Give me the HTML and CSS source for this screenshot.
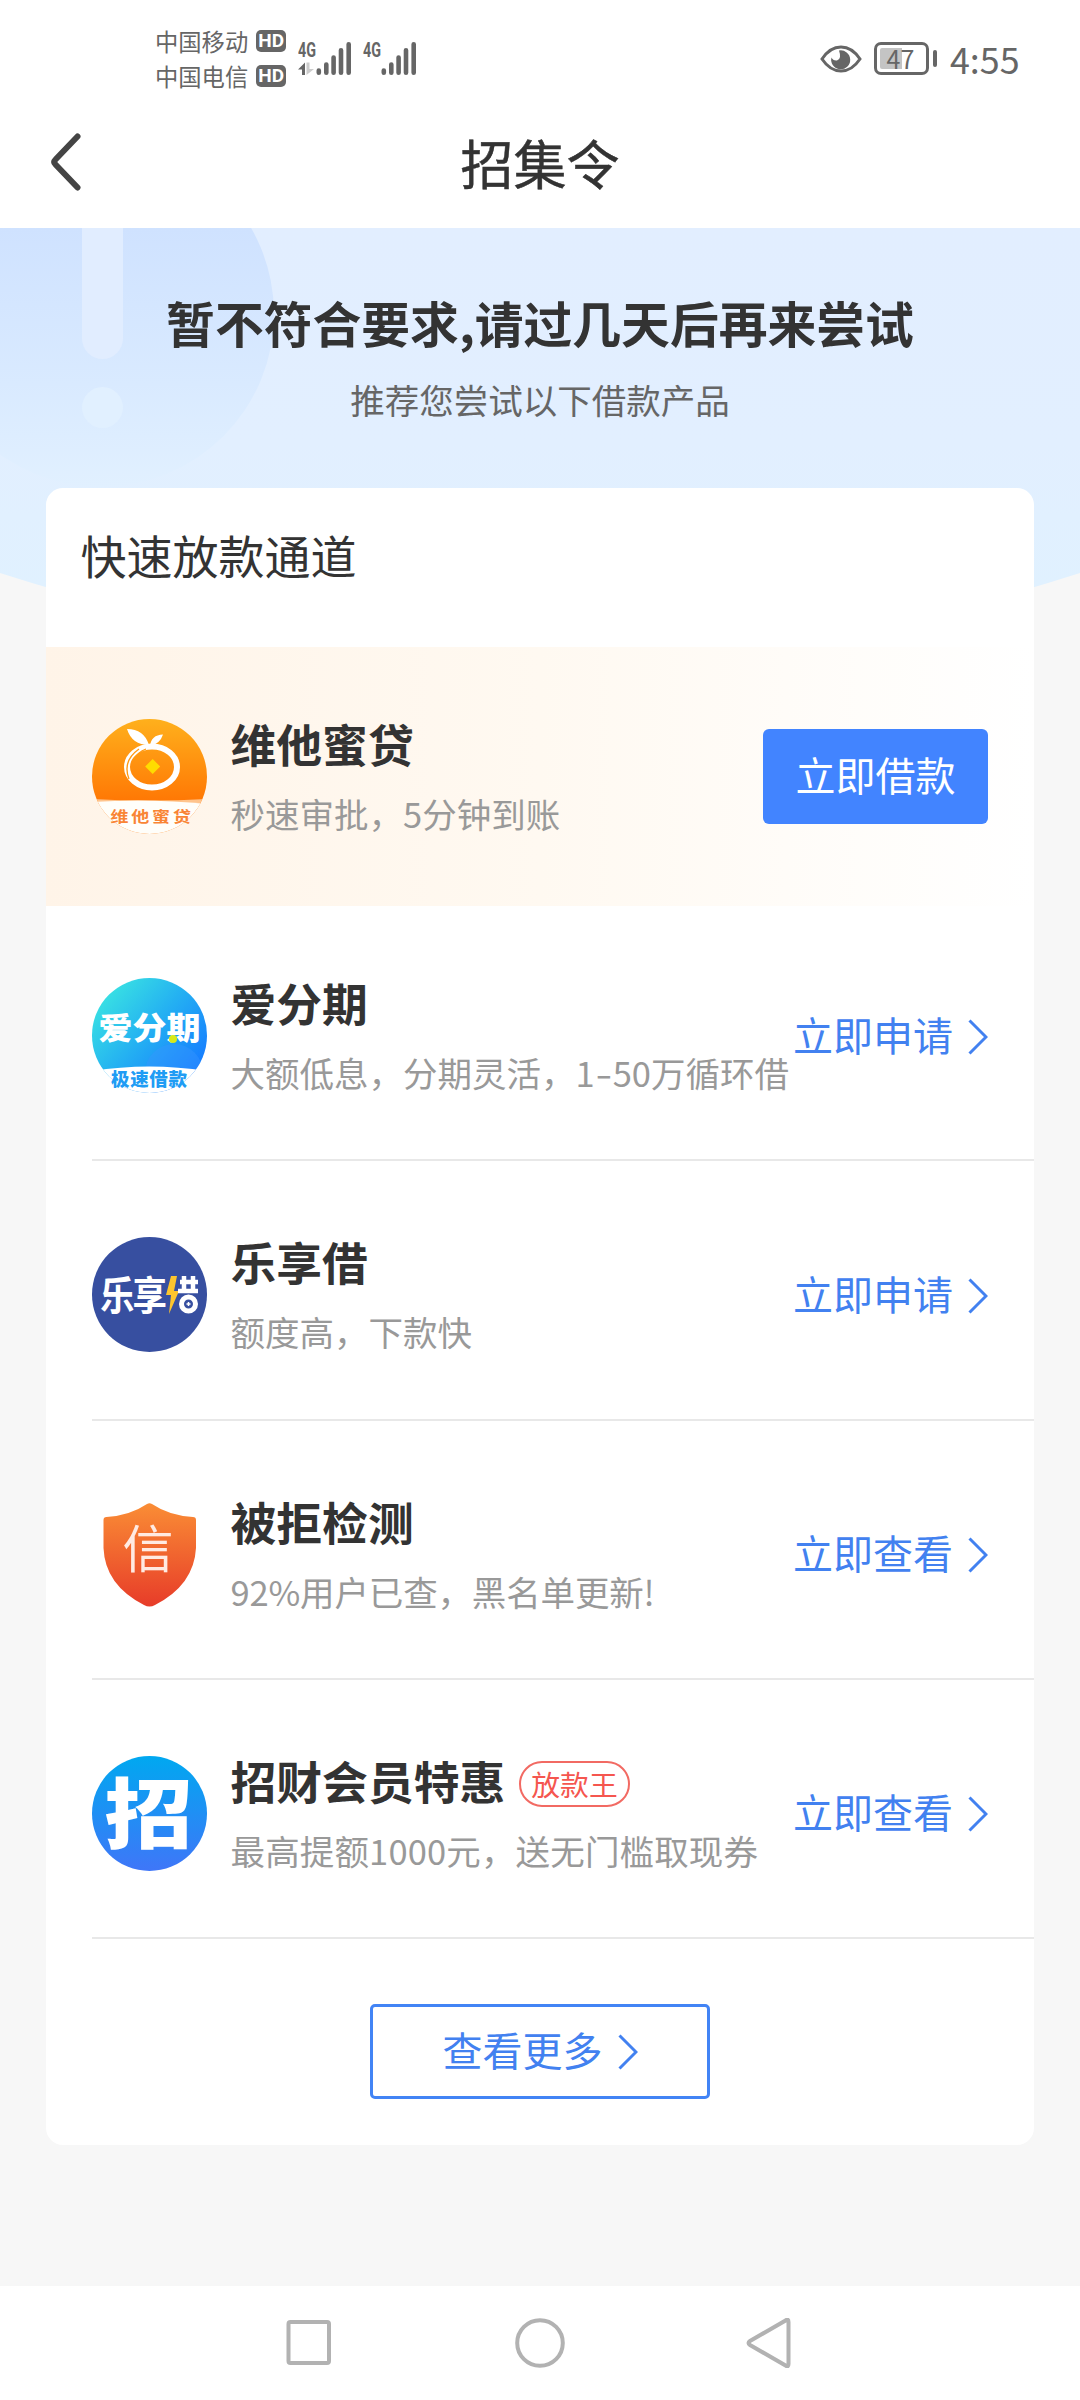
FILE: index.html
```html
<!DOCTYPE html>
<html lang="zh-CN">
<head>
<meta charset="utf-8">
<title>招集令</title>
<link rel="stylesheet" href="styles.css">
</head>
<body>
<div class="screen">
  <header class="status">
    <div class="carriers">
      <div class="carrier">中国移动<span class="hd">HD</span></div>
      <div class="carrier">中国电信<span class="hd">HD</span></div>
    </div>
    <svg class="signals" viewBox="298 38 120 42" width="120" height="42">
      <g class="net"><text x="298" y="57" textLength="18" lengthAdjust="spacingAndGlyphs">4G</text><text x="363" y="57" textLength="18" lengthAdjust="spacingAndGlyphs">4G</text></g>
      <g class="bars">
        <path d="M318.8 72.8v-2.2M326.3 72.8V64.500M333.600 72.800V57.500M341 72.800V50.300M348.700 72.800V44.300"/>
        <path d="M383.800 72.800v-2.200M391.300 72.800V64.500M398.600 72.800V57.500M406 72.800V50.300M413.700 72.800V44.300"/>
      </g>
      <path class="up" d="M305 62.500V75h-3v-5.500h-4z"/>
      <path class="down" d="M306.500 62.500h3v6.500h4.500l-7.500 6z"/>
    </svg>
    <div class="status-right">
      <svg viewBox="0 0 42 28" width="42" height="28"><path d="M2 14Q10 2 21 2T40 14Q32 26 21 26T2 14z" fill="none" stroke="#666" stroke-width="3"/><path d="M19 5.500A9.500 9.500 0 1 1 11.500 12.500Q13 16 17 15.500Q22 14 19 5.500z" fill="#666"/></svg>
      <div class="battery"><span class="level">47</span></div>
      <div class="clock">4:55</div>
    </div>
  </header>
  <nav class="title-bar">
    <svg class="back" viewBox="0 0 32 60" width="32" height="60"><path d="M28.500 4.500L6.500 27.500Q4 30 6.500 32.500L28.500 55.500" fill="none" stroke="#444" stroke-width="6" stroke-linecap="round" stroke-linejoin="round"/></svg>
    <h1>招集令</h1>
  </nav>
  <main class="content">
    <svg class="hero-art" viewBox="0 228 1080 382" width="1080" height="382">
      <defs>
        <linearGradient id="sky" x1="0" y1="0" x2="0" y2="1"><stop offset="0" stop-color="#e2eeff"/><stop offset=".5" stop-color="#e2efff"/><stop offset="1" stop-color="#dff2ff"/></linearGradient>
        <linearGradient id="disc" x1="0" y1="228" x2="0" y2="487" gradientUnits="userSpaceOnUse"><stop offset="0" stop-color="#cfe2ff"/><stop offset=".6" stop-color="#d9eaff"/><stop offset="1" stop-color="#e1f0ff"/></linearGradient>
      </defs>
      <path d="M0 228H1080V573Q810 660 540 660T0 573z" fill="url(#sky)"/>
      <circle cx="101" cy="314" r="173" fill="url(#disc)"/>
      <path d="M82 228h41v110.500a20.500 20.500 0 0 1-41 0z" fill="#e1edff"/>
      <circle cx="102.500" cy="407.500" r="20.500" fill="#e1f0ff"/>
    </svg>
    <section class="notice">
      <h2>暂不符合要求,请过几天后再来尝试</h2>
      <p>推荐您尝试以下借款产品</p>
    </section>
    <section class="card">
      <h3>快速放款通道</h3>
      <article class="row featured">
        <svg class="logo" viewBox="0 0 115 115">
          <defs><linearGradient id="orange" x1="0" y1="0" x2="0" y2="1"><stop offset="0" stop-color="#ffb01c"/><stop offset=".7" stop-color="#ff7905"/></linearGradient><clipPath id="round"><circle cx="57.500" cy="57.500" r="57.500"/></clipPath></defs>
          <g clip-path="url(#round)"><path fill="url(#orange)" d="M0 0h115v115H0z"/><path fill="#ffc48d" d="M0 80Q57 83 115 80V90H0z"/><path fill="#fffefa" d="M0 83Q57 79 115 85V115H0z"/></g>
          <ellipse cx="60" cy="48" rx="25" ry="20.500" fill="none" stroke="#fff" stroke-width="6"/>
          <path d="M37 60Q30 42 47 30M42 40Q46 33 54 30" fill="none" stroke="#ff9812" stroke-width="1.300"/>
          <path d="M35 10Q52 10 57 26Q40 26 35 10zM58 27Q59 16 71 15.500Q68 25 58 27z" fill="#fff"/>
          <path d="M60.700 40l7.500 7.500l-7.500 7.500l-7.500-7.500z" fill="#ffdc00"/>
          <text transform="translate(18.500 102.500) scale(1.200 1)" font-size="15" font-weight="700" fill="#f98435" textLength="67">维他蜜贷</text>
        </svg>
        <div class="info"><h4>维他蜜贷</h4><p>秒速审批，5分钟到账</p></div>
        <a class="borrow">立即借款</a>
      </article>
      <article class="row">
        <svg class="logo" viewBox="0 0 115 115">
          <defs><linearGradient id="cyan" x1=".1" y1=".1" x2=".9" y2=".8"><stop offset="0" stop-color="#3ae4e2"/><stop offset=".5" stop-color="#24b0f2"/><stop offset="1" stop-color="#167dff"/></linearGradient></defs>
          <g clip-path="url(#round)"><path fill="url(#cyan)" d="M0 0h115v115H0z"/><circle cx="82" cy="95" r="29" fill="#3997ff" opacity=".4"/><path fill="#fff" d="M0 93Q57 84 115 93V115H0z"/></g>
          <text transform="translate(6.500 61) scale(1 .9)" font-size="34" font-weight="900" fill="#fff" textLength="102">爱分期</text>
          <circle cx="81" cy="61" r="4" fill="#d8e91a"/>
          <text x="19" y="108" font-size="18.500" font-weight="900" fill="#209cf4" textLength="76">极速借款</text>
        </svg>
        <div class="info"><h4>爱分期</h4><p>大额低息，分期灵活，1<span class="dash">-</span>50万循环借</p></div>
        <a class="link">立即申请<svg viewBox="0 0 20 36"><path d="M1.500 1.500L18 18L1.500 34.500"/></svg></a>
      </article>
      <article class="row">
        <svg class="logo" viewBox="0 0 115 115">
          <circle cx="57.500" cy="57.500" r="57.500" fill="#374fa0"/>
          <text transform="translate(8 73) scale(1 1.150)" font-size="34.500" font-weight="700" fill="#fff" textLength="67">乐享</text>
          <path d="M79 39h6l-3 15h5L77 77l2-19h-5z" fill="#fdc52e"/>
          <path d="M88 45h18M86 54h20M92 39v15M101 39v15" stroke="#fff" stroke-width="4.500" fill="none"/>
          <circle cx="96.500" cy="67" r="7" fill="none" stroke="#fff" stroke-width="5"/><path d="M94.500 67h4M96.500 65v4" stroke="#fff" stroke-width="1.500"/>
        </svg>
        <div class="info"><h4>乐享借</h4><p>额度高，下款快</p></div>
        <a class="link">立即申请<svg viewBox="0 0 20 36"><path d="M1.500 1.500L18 18L1.500 34.500"/></svg></a>
      </article>
      <article class="row">
        <svg class="logo" viewBox="0 0 115 115">
          <defs><linearGradient id="shield" x1="0" y1="0" x2="0" y2="1"><stop offset="0" stop-color="#fa8d35"/><stop offset="1" stop-color="#e73c29"/></linearGradient></defs>
          <path d="M55 7Q57.500 5.500 60 7Q77 18.500 101 20Q104 20 104 23V51Q102 88 63 108Q57.500 111 52 108Q13 88 11.500 51V23Q11.500 20 14.500 20Q38 18.500 55 7z" fill="url(#shield)"/>
          <text x="30.500" y="71" font-size="51" fill="#ffeae2" textLength="51">信</text>
        </svg>
        <div class="info"><h4>被拒检测</h4><p class="tight">92%用户已查，黑名单更新!</p></div>
        <a class="link">立即查看<svg viewBox="0 0 20 36"><path d="M1.500 1.500L18 18L1.500 34.500"/></svg></a>
      </article>
      <article class="row">
        <svg class="logo" viewBox="0 0 115 115">
          <defs><linearGradient id="blue" x1="0" y1="0" x2="0" y2="1"><stop offset="0" stop-color="#00a8f0"/><stop offset="1" stop-color="#3f76f8"/></linearGradient></defs>
          <circle cx="57.500" cy="57.500" r="57.500" fill="url(#blue)"/>
          <text transform="translate(12.500 85.500) scale(1 .86)" font-size="88" font-weight="900" fill="#fff">招</text>
        </svg>
        <div class="info"><h4>招财会员特惠<span class="tag">放款王</span></h4><p class="loose">最高提额1000元，送无门槛取现券</p></div>
        <a class="link">立即查看<svg viewBox="0 0 20 36"><path d="M1.500 1.500L18 18L1.500 34.500"/></svg></a>
      </article>
      <a class="more">查看更多<svg viewBox="0 0 20 36"><path d="M1.500 1.500L18 18L1.500 34.500"/></svg></a>
    </section>
  </main>
  <footer class="system-nav">
    <svg viewBox="0 0 50 50"><rect x="4.500" y="4" width="40.500" height="41" rx="2"/></svg>
    <svg viewBox="0 0 50 50"><circle cx="25" cy="25" r="22.800"/></svg>
    <svg viewBox="0 0 50 50"><path d="M39.500 2.500Q42.500 0 42.500 4V46Q42.500 50 39.500 47.500L4 27Q1 25 4 23z"/></svg>
  </footer>
</div>
</body>
</html>
```
FILE: styles.css
```css
* { box-sizing: border-box; }
body { margin: 0; font-family: "Noto Sans CJK SC", sans-serif; color: #333; background: #fff; }
h1, h2, h3, h4, p { margin: 0; }
.screen { width: 1080px; height: 2400px; display: flex; flex-direction: column; overflow: hidden; }
.status { height: 118px; flex: none; padding-left: 155px; padding-right: 60px; display: flex; color: #666; }
.carriers { width: 143px; padding-top: 23px; }
.carrier { display: flex; align-items: center; gap: 8px; height: 35px; font-size: 23.3px; white-space: nowrap; }
.hd { width: 30px; height: 22px; margin-top: 1px; border-radius: 5px; background: #666; color: #fff; font: 700 19px/22px Roboto, sans-serif; text-align: center; }
.signals { margin-top: 38px; }
.net text { font: 700 20px Roboto, sans-serif; fill: #666; }
.bars { stroke: #666; stroke-width: 4.6; stroke-linecap: round; }
.up { fill: #666; }
.down { fill: #ccc; }
.status-right { margin-left: auto; height: 33px; margin-top: 42px; display: flex; align-items: center; }
.battery { position: relative; width: 55px; height: 33px; margin-left: 12px; margin-right: 21px; border: 3px solid #666; border-radius: 7px; padding: 3px; }
.battery::after { content: ""; position: absolute; right: -11px; top: 5px; width: 4.500px; height: 17px; border-radius: 2px; background: #666; }
.level { display: block; height: 21px; text-align: center; font: 25px/21px "Noto Sans CJK SC", sans-serif; background: linear-gradient(90deg, #c4c4c4 22px, transparent 22px); border-radius: 2px; padding-right: 2px; }
.clock { width: 70px; font-size: 35.800px; line-height: 33px; white-space: nowrap; }
.title-bar { height: 110px; flex: none; display: grid; grid-template-columns: 80px 1fr 80px; padding: 0 49px; }
.back { margin-top: 14px; }
.title-bar h1 { font-size: 53px; line-height: 88px; font-weight: 400; text-align: center; -webkit-text-stroke: .5px #333; }
.content { position: relative; flex: 1; background: #f7f7f7; padding: 0 46px; }
.hero-art { position: absolute; left: 0; top: 0; }
.notice { position: relative; height: 260px; text-align: center; }
.notice h2 { padding-top: 58px; font-size: 48.800px; line-height: 72px; font-weight: 700; white-space: nowrap; }
.notice p { margin-top: 16px; font-size: 34.500px; line-height: 50px; color: #666; }
.card { position: relative; height: 1657px; background: #fff; border-radius: 17px; }
.card h3 { height: 159px; padding-left: 34.500px; font-size: 46px; line-height: 133px; font-weight: 400; }
.row { position: relative; display: flex; align-items: center; height: 259.200px; margin-left: 46px; padding-right: 46px; }
.row:not(.featured)::after { content: ""; position: absolute; left: 0; right: 0; bottom: 4px; height: 2px; background: #e8e8e8; }
.featured { margin-left: 0; padding-left: 46px; background: linear-gradient(90deg, #fff4e8, #fff9f1 50%, #fff); }
.logo { width: 115px; height: 115px; flex: none; overflow: visible; }
.info { margin-left: 23.500px; white-space: nowrap; }
.info h4 { display: flex; align-items: center; font-size: 45.800px; line-height: 68px; font-weight: 700; }
.info p { margin-top: 9px; margin-bottom: 4px; font-size: 34.500px; line-height: 54px; color: #999; }
.info .tight { letter-spacing: -.15px; }
.info .loose { letter-spacing: .15px; }
.dash { display: inline-block; width: 18px; text-align: center; transform: scaleX(1.4); }
.borrow { width: 225px; height: 95px; margin-left: auto; border-radius: 6px; background: #4284ff; color: #fff; font-size: 40px; line-height: 90px; text-align: center; }
.link { margin-left: auto; width: 195px; flex: none; display: flex; align-items: center; justify-content: space-between; white-space: nowrap; color: #4281f0; font-size: 40px; line-height: 60px; padding-bottom: 4px; }
.link svg, .more svg { width: 20px; height: 36px; fill: none; stroke: #4281f0; stroke-width: 3; margin-top: 6px; }
.row:not(.featured) .info { width: 0; }
.tag { flex: none; height: 46px; margin: 8px 0 0 14px; padding: 0 10px; border: 2px solid #f26a63; border-radius: 23px; font-size: 28.800px; line-height: 41px; font-weight: 400; color: #f5564f; }
.more { width: 340px; height: 95px; margin: 61px auto 0; display: flex; align-items: center; justify-content: center; gap: 15px; border: 3px solid #4284f5; border-radius: 5px; color: #4281f0; font-size: 40px; line-height: 84px; padding-bottom: 4px; }
.system-nav { height: 114px; flex: none; display: flex; justify-content: center; gap: 181px; align-items: center; background: #fff; }
.system-nav svg { width: 50px; height: 50px; fill: none; stroke: #b2b2b2; stroke-width: 4; }
```
